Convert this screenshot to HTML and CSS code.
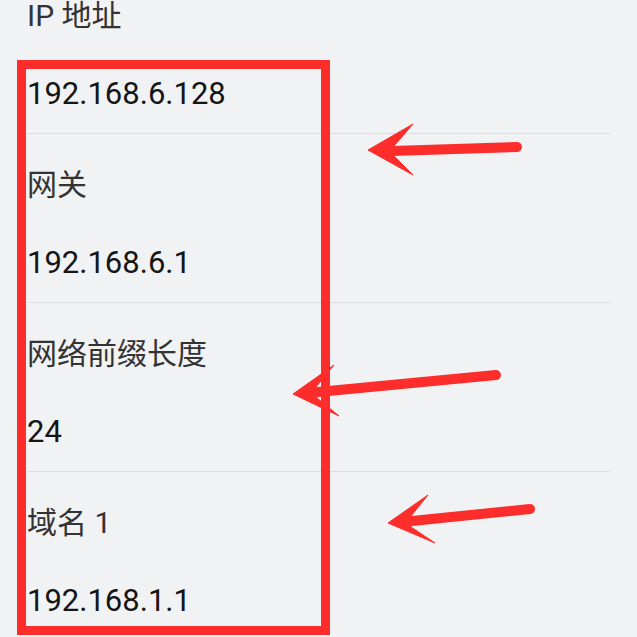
FILE: index.html
```html
<!DOCTYPE html>
<html lang="zh-CN">
<head>
<meta charset="utf-8">
<title>网络详情</title>
<link rel="stylesheet" href="styles.css">
</head>
<body>
<div class="screen">
  <ul class="list">
    <li class="row">
      <div class="label">IP 地址</div>
      <div class="value">192.168.6.128</div>
    </li>
    <li class="row">
      <div class="label">网关</div>
      <div class="value">192.168.6.1</div>
    </li>
    <li class="row">
      <div class="label">网络前缀长度</div>
      <div class="value">24</div>
    </li>
    <li class="row">
      <div class="label">域名 1</div>
      <div class="value">192.168.1.1</div>
    </li>
  </ul>

  <!-- annotation layer: highlight box and pointer arrows -->
  <div class="highlight"></div>
  <svg class="marks" width="637" height="637" viewBox="0 0 637 637">
    <g fill="#fd2d2b" stroke="#fd2d2b" stroke-linejoin="round">
      <line x1="517" y1="147" x2="392" y2="151" stroke-width="10" stroke-linecap="round"/>
      <polygon stroke-width="1" points="368,150 413,124 394,146 394,156 413,175"/>

      <line x1="496" y1="375" x2="318" y2="392" stroke-width="10" stroke-linecap="round"/>
      <polygon stroke-width="1" points="293,394 334,365 316,387 317,398 339,416"/>

      <line x1="530" y1="509" x2="412" y2="521" stroke-width="10" stroke-linecap="round"/>
      <polygon stroke-width="1" points="388,523 428,495 411,516 411,527 435,543"/>
    </g>
  </svg>
</div>
</body>
</html>
```

FILE: styles.css
```css
html, body {
  margin: 0;
  padding: 0;
  background: #f1f2f4;
}

.screen {
  position: relative;
  width: 637px;
  height: 637px;
  overflow: hidden;
  background: #f1f2f4;
  font-family: Roboto, "Noto Sans CJK SC", sans-serif;
}

.list {
  list-style: none;
  margin: -35px 0 0 0;
  padding: 0;
}

.row {
  display: flex;
  flex-direction: column;
  height: 168px;
  box-sizing: content-box;
  margin: 0 27px 0 27px;
  border-bottom: 1px solid #dcdde0;
}

.label {
  margin-top: 35px;
  height: 32px;
  line-height: 32px;
  font-size: 30px;
  color: #333333;
  white-space: nowrap;
}

.value {
  margin-top: 42px;
  height: 40px;
  line-height: 40px;
  font-size: 31px;
  color: #151515;
  white-space: nowrap;
}

.highlight {
  position: absolute;
  left: 17px;
  top: 60px;
  width: 313px;
  height: 575px;
  box-sizing: border-box;
  border: 9px solid #fd2d2b;
}

.marks {
  position: absolute;
  left: 0;
  top: 0;
}
```
